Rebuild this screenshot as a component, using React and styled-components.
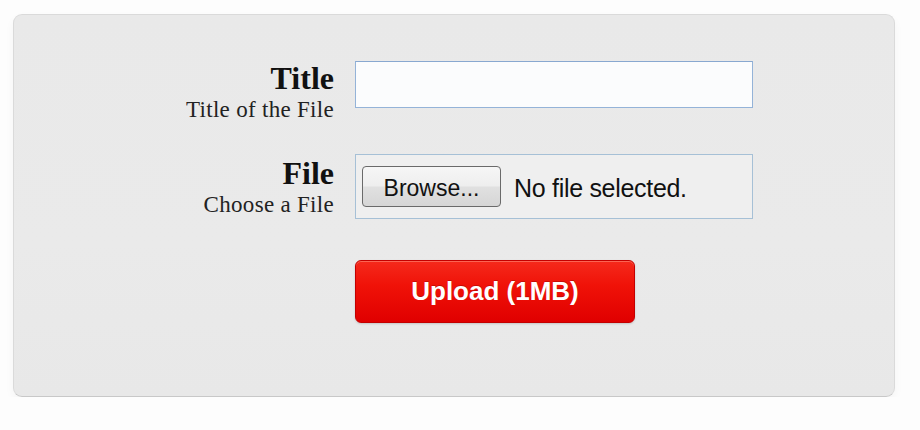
import styled, { createGlobalStyle } from 'styled-components'

const Global = createGlobalStyle`
	html, body {
		margin: 0;
		background: #fdfdfd;
	}
`

function App() {
	return (
		<>
			<Global />
			<Panel>
				<Row $gap={30}>
					<Label $top={0}>
						<Name>Title</Name>
						<Hint>Title of the File</Hint>
					</Label>
					<TextInput type="text" />
				</Row>

				<Row $gap={41}>
					<Label $top={2}>
						<Name>File</Name>
						<Hint>Choose a File</Hint>
					</Label>
					<FileBox>
						<Browse type="button">Browse...</Browse>
						<FileText>No file selected.</FileText>
					</FileBox>
				</Row>

				<Row $gap={0}>
					<span />
					<Upload type="button">Upload (1MB)</Upload>
				</Row>
			</Panel>
		</>
	)
}

export default App

const Panel = styled.div`
	box-sizing: border-box;
	display: flex;
	flex-direction: column;
	width: 882px;
	height: 383px;
	margin: 14px 0 0 13px;
	padding: 46px 0 0 160px;
	background: linear-gradient(180deg, #e9e9e9 0%, #eaeaea 60%, #e8e8e8 100%);
	border: 1px solid #dadada;
	border-bottom-color: #c8c8c8;
	border-radius: 9px;
	box-shadow: 0 4px 10px rgba(0, 0, 0, 0.04);
`

const Row = styled.div`
	display: grid;
	grid-template-columns: 160px 398px;
	column-gap: 21px;
	align-items: start;
	margin-bottom: ${(p) => p.$gap}px;
`

const Label = styled.div`
	display: flex;
	flex-direction: column;
	align-items: flex-end;
	padding-top: ${(p) => p.$top}px;
	font-family: 'Liberation Serif', 'Times New Roman', serif;
	color: #111;
	white-space: nowrap;
`

const Name = styled.div`
	font-size: 32px;
	line-height: 34px;
	font-weight: bold;
`

const Hint = styled.div`
	font-size: 23px;
	line-height: 29px;
	color: #222;
	letter-spacing: 0.3px;
`

const TextInput = styled.input`
	box-sizing: border-box;
	width: 398px;
	height: 47px;
	margin: 0;
	border: 1px solid #94b3d8;
	border-top-color: #88a8d0;
	background: #fbfcfd;
	outline: none;
`

const FileBox = styled.div`
	box-sizing: border-box;
	display: flex;
	align-items: center;
	gap: 13px;
	height: 65px;
	padding: 0 6px;
	border: 1px solid #a6c0d6;
	background: #efefef;
`

const Browse = styled.button`
	box-sizing: border-box;
	width: 139px;
	height: 41px;
	padding: 3px 0 0;
	border: 1px solid #6a6a6a;
	border-radius: 4px;
	background: linear-gradient(180deg, #f6f6f6 0%, #eeeeee 48%, #e0e0e0 52%, #d6d6d6 100%);
	font-family: 'Liberation Sans', Arial, sans-serif;
	font-size: 23px;
	color: #111;
`

const FileText = styled.span`
	padding-top: 3px;
	font-family: 'Liberation Sans', Arial, sans-serif;
	font-size: 25px;
	color: #111;
	letter-spacing: -0.3px;
`

const Upload = styled.button`
	box-sizing: border-box;
	width: 280px;
	height: 63px;
	padding: 0;
	border: 1px solid #c40000;
	border-radius: 6px;
	background: linear-gradient(180deg, #f52a1c 0%, #f01208 40%, #e00000 100%);
	box-shadow: inset 0 1px 0 rgba(255, 140, 120, 0.6), 0 1px 2px rgba(0, 0, 0, 0.15);
	font-family: 'Liberation Sans', Arial, sans-serif;
	font-size: 26px;
	font-weight: bold;
	color: #fff;
	text-shadow: 0 -1px 0 rgba(120, 0, 0, 0.35);
`
